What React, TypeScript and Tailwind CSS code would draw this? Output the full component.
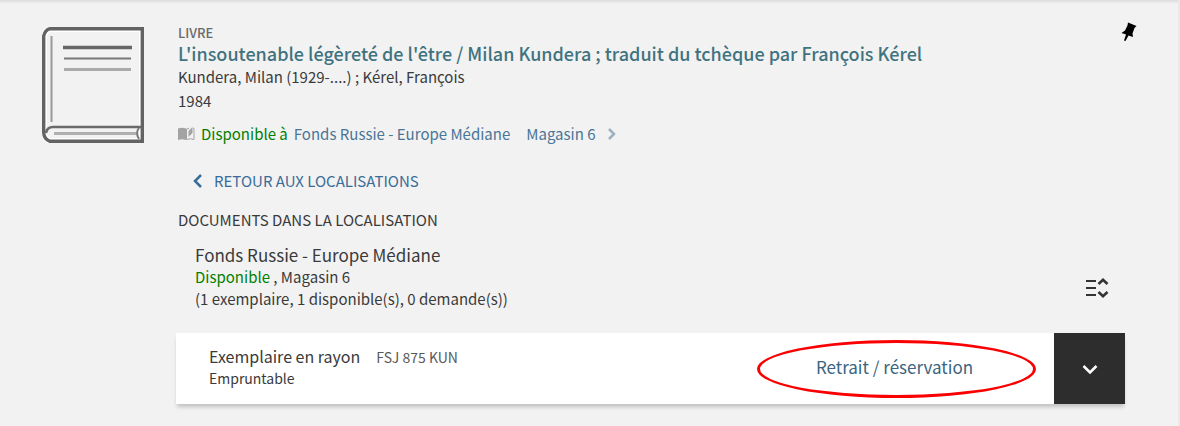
import React, { useState } from 'react';

const BookCover = () => (
  <svg viewBox="0 0 102 116" className="w-[102px] shrink-0" fill="none" aria-hidden="true">
    <path d="M8 2H100V114H8Q2 112 2 105V9Q3 3 8 2Z" stroke="#fff" strokeWidth="6" />
    <path d="M8 1.700H100.300V114.300H8Q1.700 112 1.700 105V9Q3 3 8 1.700Z" stroke="#636363" strokeWidth="3.400" />
    <path d="M4 106Q5 100 11 100H99" stroke="#6a6a6a" strokeWidth="2.600" />
    <path d="M12 106.500H94" stroke="#b0b0b0" strokeWidth="3" />
    <path d="M97 101Q93 106 97 112" stroke="#777" strokeWidth="2" />
    <path d="M9.500 9V95" stroke="#999" strokeWidth="2" />
    <path d="M21 20.500H90" stroke="#666" strokeWidth="3.500" />
    <path d="M22 31.500H89" stroke="#777" strokeWidth="2" />
    <path d="M22 42.500H89" stroke="#aaa" strokeWidth="3" />
  </svg>
);

const PinIcon = () => (
  <svg viewBox="0 0 16 20" className="w-4" aria-hidden="true">
    <path d="M7 0.500L15.500 4L13.500 6L11.500 11.500L12 15L7.500 13.500L4.500 19L3 18.500L5 12.500L0.500 11L4 8.500L6.500 3.500Z" fill="#000" />
  </svg>
);

const OpenBookIcon = () => (
  <svg viewBox="0 0 17 14" className="w-[17px]" aria-hidden="true">
    <path d="M0 1.500Q4 0 8 1.500V13Q4 11.500 0 13Z" fill="#a3a3a3" />
    <path d="M8.500 12.500Q12.500 11 16 12.500V1.500L15 1M8.500 12.500V2L11 1.200" fill="none" stroke="#a3a3a3" />
    <path d="M14.500 0V6L10.500 10V4Z" fill="#a3a3a3" />
  </svg>
);

interface ChevronProps {
  points: string;
  className: string;
}

const Chevron: React.FC<ChevronProps> = ({ points, className }) => (
  <svg viewBox="0 0 16 16" className={className} fill="none" stroke="currentColor" strokeWidth="2.500" aria-hidden="true">
    <polyline points={points} />
  </svg>
);

const ExpandAllIcon = () => (
  <svg viewBox="0 0 24 20" className="w-6" fill="none" stroke="#333" strokeWidth="2" aria-hidden="true">
    <path d="M1 3H11M1 10H11M1 17H11" strokeWidth="2.200" />
    <path d="M13.500 6L18 1.800L22.500 6M13.500 14L18 18.200L22.500 14" strokeWidth="2.600" />
  </svg>
);

export default function App() {
  const [open, setOpen] = useState(false);

  return (
    <main className="min-h-screen border-r-2 border-[#e9e9e9] bg-[#f2f2f2] font-['Noto_Sans_CJK_SC','Source_Sans_Pro',sans-serif] text-[#3a3a3a]">
      <div className="h-1 bg-linear-to-b from-[#dcdcdc] to-[#f2f2f2]" />
      <div className="flex items-start pt-5 pr-[53px] pb-5 pl-[42px]">
        <div className="pt-[3px]">
          <BookCover />
        </div>

        <div className="min-w-0 flex-1 pl-8">
          <header className="flex items-start justify-between pl-0.5">
            <div>
              <p className="text-[13px] leading-[18px] font-medium text-[#6a6a6a]">LIVRE</p>
              <h1 className="text-lg leading-[23px] font-medium">
                <a href="#notice" className="text-[#41727f]">L'insoutenable légèreté de l'être / Milan Kundera ; traduit du tchèque par François Kérel</a>
              </h1>
              <p className="text-[15px] leading-6">Kundera, Milan (1929-....) ; Kérel, François</p>
              <p className="text-[15px] leading-[23px]">1984</p>
              <p className="mt-2.5 flex items-center text-[15px] leading-6">
                <OpenBookIcon />
                <span className="ml-1.5 text-[#008000]">Disponible à</span>
                <a href="#localisation" className="ml-1.5 flex items-center text-[#4a7596]">
                  <span>Fonds Russie - Europe Médiane</span>
                  <span className="ml-4">Magasin 6</span>
                  <Chevron points="5,3 10,8 5,13" className="ml-2 w-4 text-[#9bb0c2]" />
                </a>
              </p>
            </div>
            <button type="button" aria-label="Épingler" className="-mt-0.5 -mr-3">
              <PinIcon />
            </button>
          </header>

          <a href="#localisations" className="mt-[23px] ml-3.5 inline-flex items-center text-[15px] leading-6 text-[#396d99]">
            <Chevron points="11,2 5,8 11,14" className="mr-2 w-4" />
            RETOUR AUX LOCALISATIONS
          </a>

          <h2 className="mt-3.5 pl-0.5 text-[15px] leading-6">DOCUMENTS DANS LA LOCALISATION</h2>

          <section className="mt-3 flex items-end justify-between pr-4 pl-[19px]">
            <div>
              <h3 className="text-[17px] leading-[22px]">Fonds Russie - Europe Médiane</h3>
              <p className="text-[15px] leading-[22px]">
                <span className="text-[#008000]">Disponible</span> , Magasin 6
              </p>
              <p className="text-[15px] leading-[22px]">(1 exemplaire, 1 disponible(s), 0 demande(s))</p>
            </div>
            <button type="button" aria-label="Tout développer" className="pb-3">
              <ExpandAllIcon />
            </button>
          </section>

          <article className="mt-[23px] flex bg-white shadow-[0_4px_4px_-1px_rgba(0,0,0,0.2)]">
            <div className="flex-1 pt-3 pb-4 pl-[33px]">
              <p className="flex items-baseline gap-4 leading-[22px]">
                <span className="text-base leading-[22px]">Exemplaire en rayon</span>
                <span className="text-sm leading-[22px] text-[#5a5a5a]">FSJ 875 KUN</span>
              </p>
              <p className="text-sm leading-5">Empruntable</p>
            </div>
            <a
              href="#reservation"
              className="mr-[18px] flex h-[58px] w-[279px] items-center justify-center self-center rounded-[50%] border-3 border-[#fb0000] pr-1 pb-1 text-[17px] leading-6 text-[#3b6580]"
            >
              Retrait / réservation
            </a>
            <button
              type="button"
              aria-label="Détails de l'exemplaire"
              aria-expanded={open}
              onClick={() => setOpen(!open)}
              className="flex w-[71px] items-center justify-center bg-[#2d2d2d] text-white"
            >
              <Chevron points="1.500,5 8,11.500 14.500,5" className="w-4" />
            </button>
          </article>
        </div>
      </div>
    </main>
  );
}
